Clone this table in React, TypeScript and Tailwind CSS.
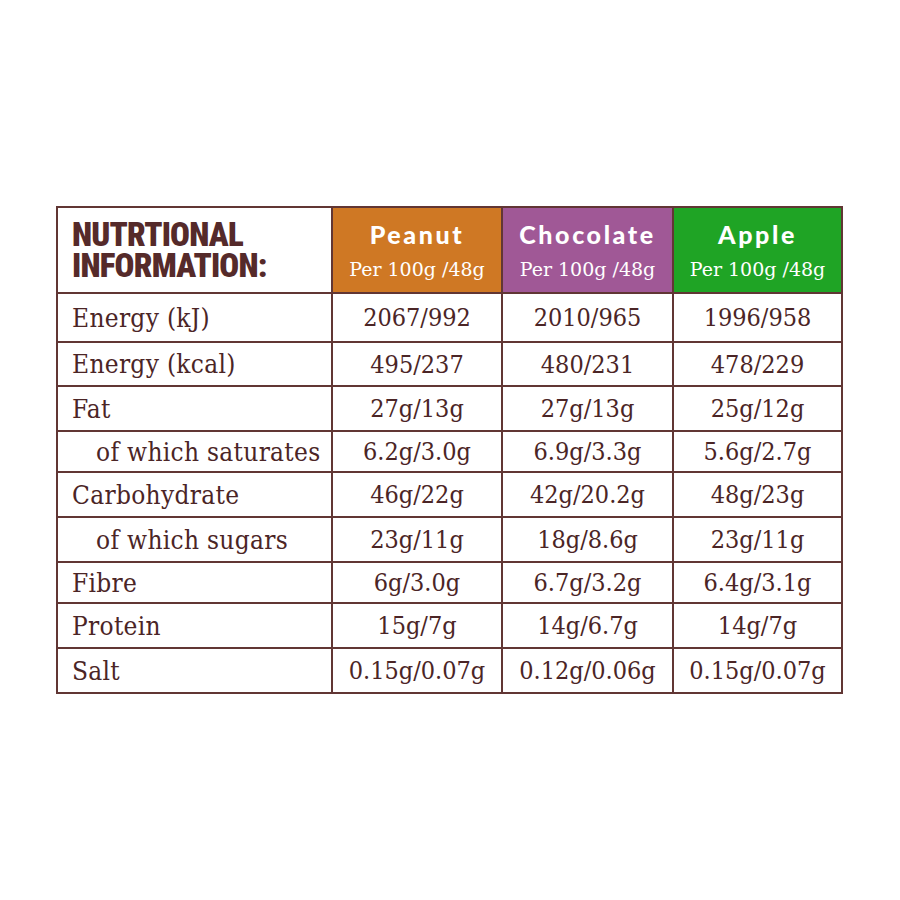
import React from "react";

type Row = { label: string; indent?: boolean; values: [string, string, string] };

const rows: Row[] = [
  { label: "Energy (kJ)", values: ["2067/992", "2010/965", "1996/958"] },
  { label: "Energy (kcal)", values: ["495/237", "480/231", "478/229"] },
  { label: "Fat", values: ["27g/13g", "27g/13g", "25g/12g"] },
  { label: "of which saturates", indent: true, values: ["6.2g/3.0g", "6.9g/3.3g", "5.6g/2.7g"] },
  { label: "Carbohydrate", values: ["46g/22g", "42g/20.2g", "48g/23g"] },
  { label: "of which sugars", indent: true, values: ["23g/11g", "18g/8.6g", "23g/11g"] },
  { label: "Fibre", values: ["6g/3.0g", "6.7g/3.2g", "6.4g/3.1g"] },
  { label: "Protein", values: ["15g/7g", "14g/6.7g", "14g/7g"] },
  { label: "Salt", values: ["0.15g/0.07g", "0.12g/0.06g", "0.15g/0.07g"] },
];

const heads = [
  { name: "Peanut", bg: "bg-[#cf7824]" },
  { name: "Chocolate", bg: "bg-[#a05896]" },
  { name: "Apple", bg: "bg-[#1fa425]" },
];

export default function App() {
  return (
    <div className="w-[900px] h-[900px] bg-white pt-[206px] pl-[56px]">
      <div className="grid w-[787px] grid-cols-[273px_168px_169px_167px] grid-rows-[84px_47px_42px_43px_39px_43px_43px_39px_43px_43px] gap-[2px] bg-[#613634] p-[2px] text-[#4b2526] font-['DejaVu_Serif_Condensed','DejaVu_Serif',serif] text-[25px]">
        <div className="bg-white flex flex-col justify-center pl-[14px] font-['Roboto_Condensed','Roboto',sans-serif] font-black text-[33px] leading-[31px] tracking-[-0.8px] text-[#552a2a]">
          <span>NUTRTIONAL</span>
          <span>INFORMATION:</span>
        </div>
        {heads.map((h) => (
          <div key={h.name} className={`${h.bg} flex flex-col items-center justify-center text-white`}>
            <span className="font-['Lato',sans-serif] font-black text-[25px] leading-[30px] tracking-[2.6px] mb-[8px]">
              {h.name}
            </span>
            <span className="font-['DejaVu_Serif',serif] text-[19px] leading-[24px]">Per 100g /48g</span>
          </div>
        ))}
        {rows.map((r) => (
          <React.Fragment key={r.label}>
            <div
              className={`bg-white flex items-center leading-none text-[26px] tracking-[0.3px] ${
                r.indent ? "pl-[38px]" : "pl-[14px]"
              }`}
            >
              {r.label}
            </div>
            {r.values.map((v, i) => (
              <div key={i} className="bg-white flex items-center justify-center leading-none">
                {v}
              </div>
            ))}
          </React.Fragment>
        ))}
      </div>
    </div>
  );
}
